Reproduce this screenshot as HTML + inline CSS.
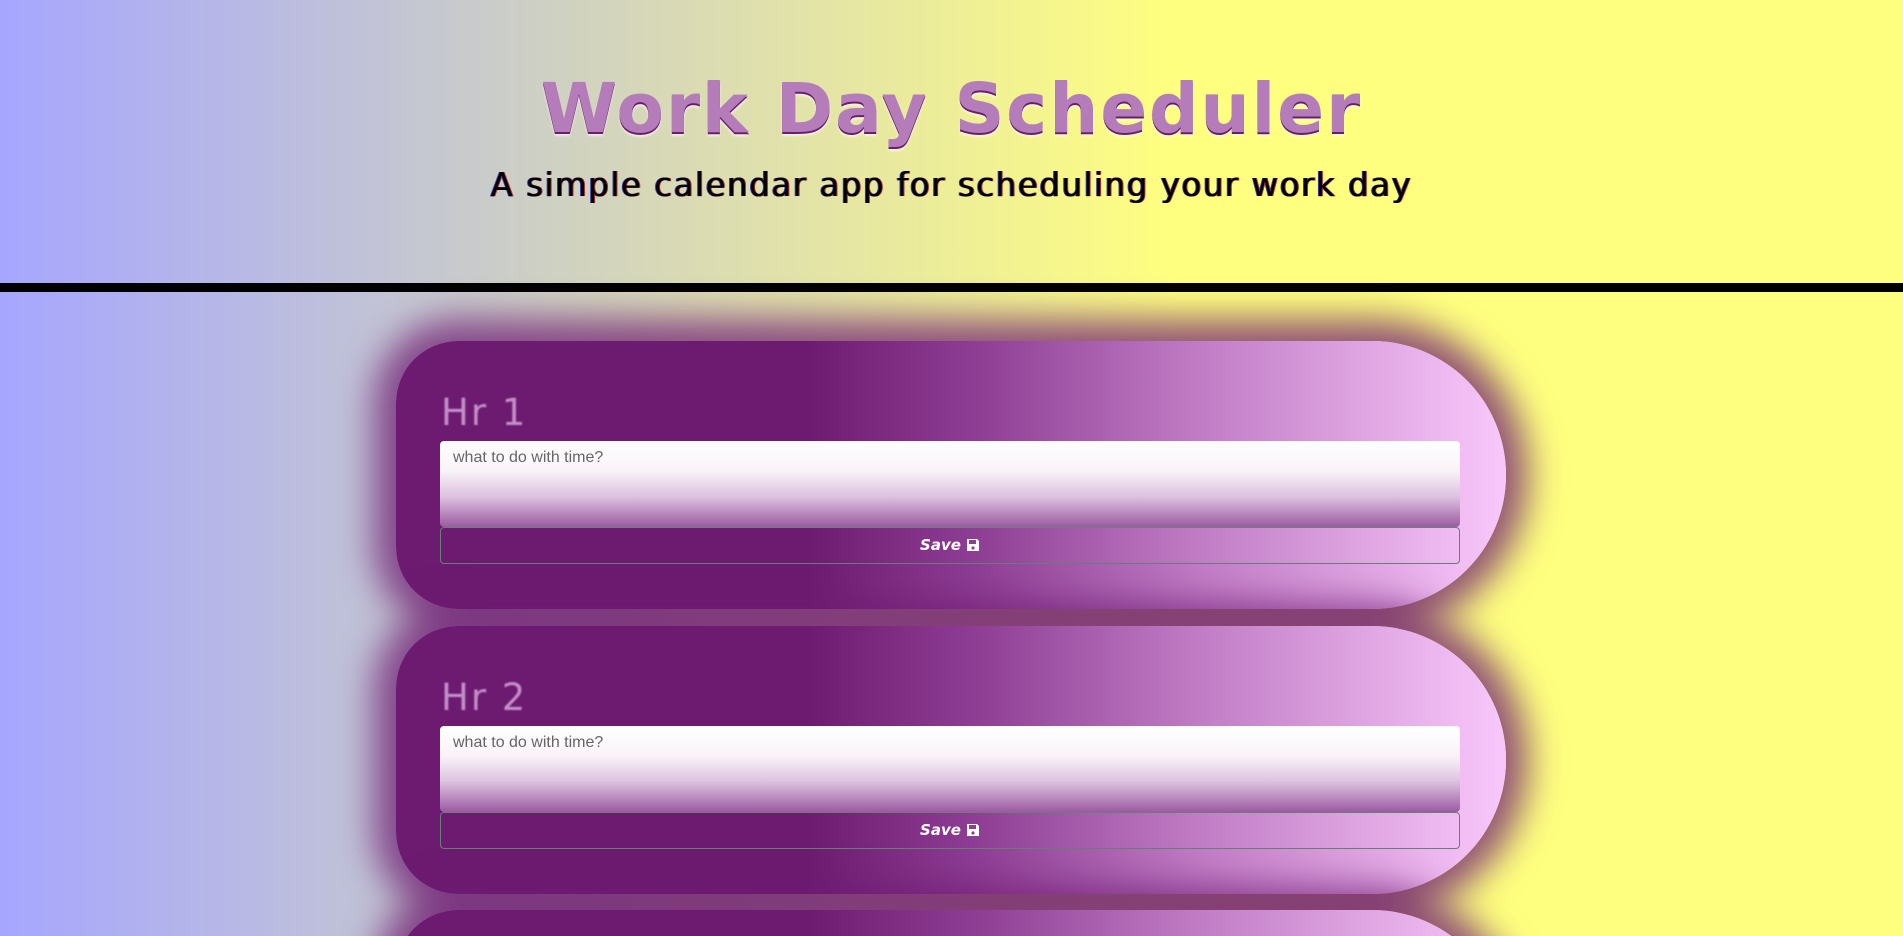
<!DOCTYPE html>
<html><head><meta charset="utf-8"><style>
html,body{margin:0;padding:0;width:1903px;height:936px;overflow:hidden;}
body{background:linear-gradient(90deg,#a6a6ff 0%,#c9cbcb 25%,#ffff7f 62%,#ffff7f 100%);font-family:"DejaVu Sans","Liberation Sans",sans-serif;position:relative;}
#wrap{position:absolute;left:0;top:0;width:1903px;height:936px;overflow:hidden;}
header{height:283px;border-bottom:9px solid #000;position:relative;text-align:center;}
h1{margin:0;position:absolute;left:0;right:0;top:64px;font-size:69px;font-weight:bold;color:#b57cba;letter-spacing:2px;text-shadow:0 2px 0 #6d1b71,0 4px 2px rgba(255,255,255,.6);line-height:90px;}
.sub{position:absolute;left:0;right:0;top:165px;font-size:32.5px;color:#000;letter-spacing:1.5px;line-height:40px;text-shadow:1px 0 0 #a33,-1px 0 0 #33a;}
.card{position:absolute;left:396px;width:1110px;height:268px;border-radius:62px 134px 134px 62px;background:linear-gradient(90deg,#6d1b71 0%,#6d1b71 37%,#8d3d93 52%,#c07bc4 72%,#f9c8fb 100%);box-shadow:0 0 35px 22px rgba(109,27,113,.75);}
.hr{position:absolute;left:45px;top:52px;font-size:37px;color:#c28fc8;filter:blur(.7px);letter-spacing:2px;line-height:40px;}
.ta{position:absolute;left:44px;top:100px;width:1020px;height:86px;border-radius:4px;background:linear-gradient(180deg,#fff 0%,#f9f3f8 35%,#dcc1df 65%,#9b5aa0 100%);box-sizing:border-box;}
.ta span{position:absolute;left:13px;top:8px;font-family:"Liberation Sans",Arial,sans-serif;font-size:16px;color:#666;}
.btn{position:absolute;left:44px;top:186px;width:1020px;height:37px;border:1px solid #667f77;border-radius:4px;box-sizing:border-box;color:#fff;font-size:15px;font-weight:bold;font-style:italic;text-align:center;line-height:35px;}
.btn svg{vertical-align:-2px;margin-left:5px}
</style></head><body><div id="wrap">
<header><h1>Work Day Scheduler</h1><div class="sub">A simple calendar app for scheduling your work day</div></header>
<div class="card" style="top:341px"><div class="hr">Hr 1</div><div class="ta"><span>what to do with time?</span></div><div class="btn">Save<svg width="14" height="14" viewBox="0 0 14 14"><path d="M1 1h10l2 2v10H1z" fill="#fff"/><rect x="3" y="2" width="7" height="4" fill="#8d3d93"/><circle cx="7" cy="10" r="1.6" fill="#8d3d93"/></svg></div></div>
<div class="card" style="top:626px"><div class="hr">Hr 2</div><div class="ta"><span>what to do with time?</span></div><div class="btn">Save<svg width="14" height="14" viewBox="0 0 14 14"><path d="M1 1h10l2 2v10H1z" fill="#fff"/><rect x="3" y="2" width="7" height="4" fill="#8d3d93"/><circle cx="7" cy="10" r="1.6" fill="#8d3d93"/></svg></div></div>
<div class="card" style="top:910px"><div class="hr">Hr 3</div></div>
</div></body></html>
